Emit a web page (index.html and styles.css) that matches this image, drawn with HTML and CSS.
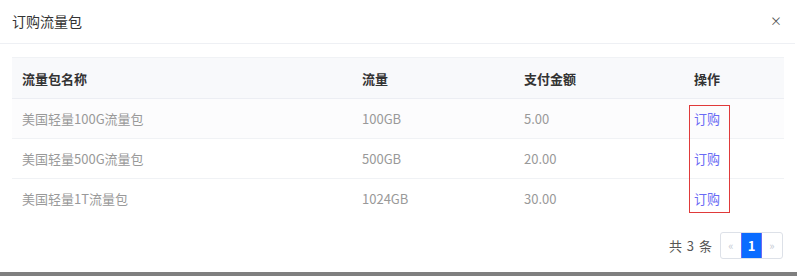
FILE: index.html
```html
<!DOCTYPE html>
<html lang="zh-CN">
<head>
<meta charset="utf-8">
<title>订购流量包</title>
<link rel="stylesheet" href="styles.css">
</head>
<body>
<div class="modal">
  <div class="modal-header">
    <span class="modal-title">订购流量包</span>
    <span class="modal-close">×</span>
  </div>
  <div class="modal-body">
    <div class="table-wrap">
      <table class="tbl">
        <colgroup>
          <col class="c1"><col class="c2"><col class="c3"><col class="c4">
        </colgroup>
        <thead>
          <tr><th>流量包名称</th><th>流量</th><th>支付金额</th><th>操作</th></tr>
        </thead>
        <tbody>
          <tr class="odd"><td>美国轻量100G流量包</td><td>100GB</td><td>5.00</td><td><a class="buy">订购</a></td></tr>
          <tr><td>美国轻量500G流量包</td><td>500GB</td><td>20.00</td><td><a class="buy">订购</a></td></tr>
          <tr><td>美国轻量1T流量包</td><td>1024GB</td><td>30.00</td><td><a class="buy">订购</a></td></tr>
        </tbody>
      </table>
      <div class="highlight"></div>
    </div>
    <div class="pager-row">
      <span class="total">共 3 条</span>
      <div class="pager">
        <span class="pg pg-arrow">«</span>
        <span class="pg pg-active">1</span>
        <span class="pg pg-arrow">»</span>
      </div>
    </div>
  </div>
</div>
<div class="backdrop-strip"></div>
</body>
</html>
```

FILE: styles.css
```css
html, body {
  margin: 0;
  padding: 0;
  background: #ffffff;
  font-family: "Noto Sans CJK SC", "Noto Sans", sans-serif;
}
body {
  width: 797px;
  height: 276px;
  overflow: hidden;
  display: flex;
  flex-direction: column;
}
.modal {
  width: 795px;
  height: 272px;
  background: #ffffff;
  border-radius: 0 0 4px 4px;
  box-sizing: border-box;
  display: flex;
  flex-direction: column;
}
.modal-header {
  height: 44px;
  border-bottom: 1px solid #eef0f4;
  display: flex;
  align-items: center;
  justify-content: space-between;
  padding: 0 13px 0 12px;
  box-sizing: border-box;
}
.modal-title {
  font-size: 14px;
  color: #333333;
  line-height: 20px;
  margin-top: -2px;
}
.modal-close {
  font-size: 12px;
  color: #555555;
  line-height: 12px;
  margin-top: -1px;
}
.modal-body {
  padding: 13px 11px 0 12px;
  display: flex;
  flex-direction: column;
}
.table-wrap {
  position: relative;
  width: 772px;
}
.tbl {
  width: 772px;
  border-collapse: collapse;
  table-layout: fixed;
  font-size: 13px;
}
.c1 { width: 340px; }
.c2 { width: 162px; }
.c3 { width: 170px; }
.c4 { width: 100px; }
.tbl th {
  height: 41px;
  background: #f8f9fb;
  border-top: 1px solid #f0f2f5;
  border-bottom: 1px solid #eceef3;
  text-align: left;
  padding: 0 10px;
  font-weight: 700;
  color: #333333;
  box-sizing: border-box;
}
.tbl td {
  height: 40px;
  padding: 0 10px;
  color: #999999;
  border-bottom: 1px solid #f0f2f5;
  box-sizing: border-box;
}
.tbl tbody tr:last-child td { border-bottom: none; }
.tbl tr.odd td { background: #fcfcfd; }
.buy {
  color: #6a6af5;
  cursor: pointer;
}
.highlight {
  position: absolute;
  left: 677px;
  top: 48px;
  width: 39px;
  height: 106px;
  border: 1px solid #e03a3a;
  pointer-events: none;
}
.pager-row {
  display: flex;
  justify-content: flex-end;
  align-items: center;
  gap: 7px;
  margin-top: 13px;
  padding-right: 1px;
}
.total {
  font-size: 13px;
  color: #555555;
  letter-spacing: 1px;
}
.pager {
  display: flex;
  height: 27px;
  border: 1px solid #dde1e8;
  border-radius: 3px;
  box-sizing: border-box;
  overflow: hidden;
}
.pg {
  width: 20px;
  display: flex;
  align-items: center;
  justify-content: center;
  font-size: 12px;
}
.pg-arrow {
  color: #c5cad3;
  font-size: 11px;
}
.pg-active {
  background: #0a6cff;
  color: #ffffff;
  font-weight: 700;
  font-size: 13px;
  width: 21px;
  border-left: 1px solid #6a6af5;
  border-right: 1px solid #6a6af5;
  box-sizing: border-box;
}
.backdrop-strip {
  height: 4px;
  background: #7f7f7f;
  margin-top: 0;
}
```
